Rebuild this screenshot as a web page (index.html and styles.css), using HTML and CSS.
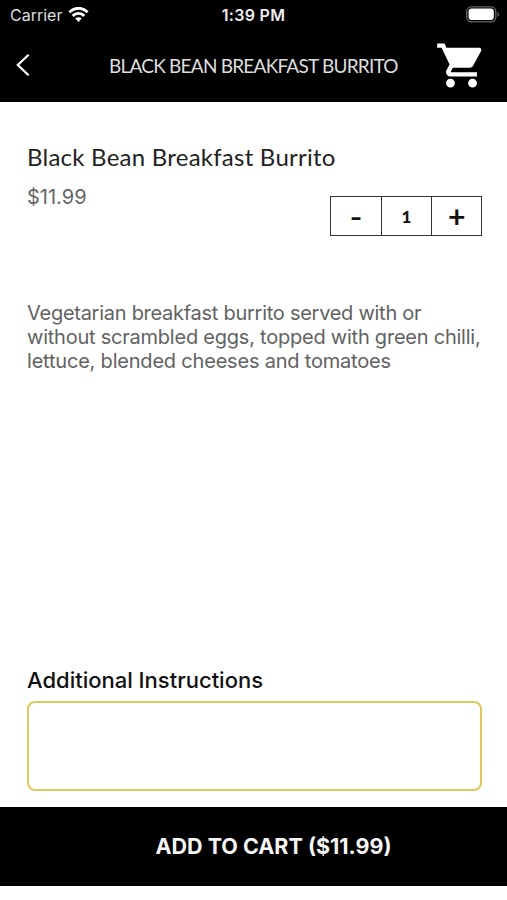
FILE: index.html
```html
<!DOCTYPE html>
<html lang="en">
<head>
<meta charset="utf-8">
<title>Black Bean Breakfast Burrito</title>
<link rel="stylesheet" href="styles.css">
</head>
<body>
<header class="top">
  <div class="status">
    <div class="network"><span class="carrier">Carrier</span>
      <svg class="wifi" viewBox="0 0 20 15" fill="none" stroke="#fff" stroke-width="2.9"><path d="M.9 5.3C6-.1 14-.1 19.1 5.3M4.2 8.9c3.3-3.3 8.3-3.3 11.6 0"/><path d="M10 15l-3.2-3.4c1.8-1.8 4.6-1.8 6.4 0z" fill="#fff" stroke="none"/></svg>
    </div>
    <span class="time">1:39 PM</span>
    <svg class="battery" viewBox="0 0 34 17"><rect x=".8" y=".8" width="29" height="15" rx="4.5" fill="none" stroke="#666" stroke-width="1.3"/><rect x="2.6" y="2.6" width="25.2" height="11.4" rx="3" fill="#fff"/><path d="M31.5 6v5c2-.8 2-4.2 0-5z" fill="#666"/></svg>
  </div>
  <nav class="nav">
    <svg class="back" viewBox="0 0 14 24" fill="none" stroke="#fff" stroke-width="2.2"><path d="M12.6 1.8 1.8 12l10.8 10.2"/></svg>
    <h1 class="nav-title">BLACK BEAN BREAKFAST BURRITO</h1>
    <svg class="cart" viewBox="0 0 24 24" fill="#fff"><path d="M7 18c-1.1 0-1.99.9-1.99 2S5.9 22 7 22s2-.9 2-2-.9-2-2-2zM1 2v2h2l3.6 7.59-1.35 2.45c-.16.28-.25.61-.25.96 0 1.1.9 2 2 2h12v-2H7.42c-.14 0-.25-.11-.25-.25l.03-.12.9-1.63h7.45c.75 0 1.41-.41 1.75-1.03l3.58-6.49A1 1 0 0 0 20 4H5.21l-.94-2H1zm16 16c-1.1 0-1.99.9-1.99 2s.89 2 1.99 2 2-.9 2-2-.9-2-2-2z"/></svg>
  </nav>
</header>
<main class="content">
  <h2 class="name">Black Bean Breakfast Burrito</h2>
  <div class="purchase">
    <span class="price">$11.99</span>
    <div class="stepper">
      <div class="cell"><span class="minus">-</span></div>
      <div class="cell"><span class="count">1</span></div>
      <div class="cell"><span class="plus">+</span></div>
    </div>
  </div>
  <p class="description"><span class="line l1">Vegetarian breakfast burrito served with or</span> <span class="line l2">without scrambled eggs, topped with green chilli,</span> <span class="line l3">lettuce, blended cheeses and tomatoes</span></p>
  <h3 class="label">Additional Instructions</h3>
  <div class="instructions"></div>
</main>
<footer class="add"><span>ADD TO CART ($11.99)</span></footer>
</body>
</html>
```
FILE: styles.css
```css
* { box-sizing: border-box; }
body { margin: 0; height: 900px; display: flex; flex-direction: column; background: #fff; font-family: Inter, sans-serif; overflow: hidden; }
svg { display: block; flex: none; }
h1, h2, h3, p { margin: 0; font-weight: 400; white-space: nowrap; }
.top { height: 102px; background: #000; color: #fff; flex: none; }
.status { height: 30px; display: grid; grid-template-columns: 1fr auto 1fr; align-items: center; padding: 0 8px 0 10px; }
.network { display: flex; align-items: center; gap: 6px; }
.carrier { font-size: 16px; line-height: 20px; color: #ddd; }
.wifi { width: 21px; height: 15px; margin-top: -1px; }
.time { font-size: 16px; line-height: 20px; font-weight: 600; letter-spacing: .3px; margin-left: -2px; color: #eee; }
.battery { width: 34px; height: 17px; justify-self: end; margin: -1px -1px 0 0; }
.nav { height: 72px; display: flex; align-items: center; padding-left: 16px; }
.back { width: 14px; height: 24px; margin-top: -2px; }
.nav-title { font: 400 19px/24px Lato, sans-serif; letter-spacing: -.77px; width: 290px; margin-left: 79px; color: #dedede; }
.cart { width: 53px; height: 53px; margin-left: 36px; margin-top: -1px; }
.content { flex: none; height: 705px; padding: 40px 25px 0 27px; }
.name { font: 400 24px/30px Lato, sans-serif; letter-spacing: .24px; color: #222; }
.purchase { display: flex; justify-content: space-between; height: 64px; margin-top: 13px; }
.price { font-size: 20px; line-height: 24px; color: #666; }
.stepper { display: grid; grid-template-columns: repeat(3, 1fr); width: 152px; height: 40px; margin-top: 11px; border: 1px solid #333; }
.cell { display: flex; align-items: center; justify-content: center; color: #111; }
.cell + .cell { border-left: 1px solid #333; }
.minus { font: 700 27px/30px Lato, sans-serif; transform: translateY(1px) scaleX(1.25); }
.count { font: 900 17px/20px Lato, sans-serif; transform: translateY(1px); }
.plus { font: 700 27px/30px Lato, sans-serif; transform: translateY(1px) scale(1.12); }
.description { height: 72px; margin-top: 51.5px; font-size: 20px; line-height: 24px; color: #626262; }
.line { display: block; }
.l1 { letter-spacing: -.27px; }
.l2 { letter-spacing: -.23px; }
.l3 { letter-spacing: -.2px; }
.label { margin-top: 293.5px; font-size: 22px; line-height: 28px; font-weight: 500; color: #111; }
.instructions { height: 90px; margin-top: 7px; border: 2px solid #dfc95f; border-radius: 8px; }
.add { height: 79px; flex: none; display: flex; align-items: center; justify-content: center; padding: 0 0 2px 40px; background: #000; color: #f5f5f5; font-size: 21.5px; font-weight: 700; line-height: 24px; }
```
